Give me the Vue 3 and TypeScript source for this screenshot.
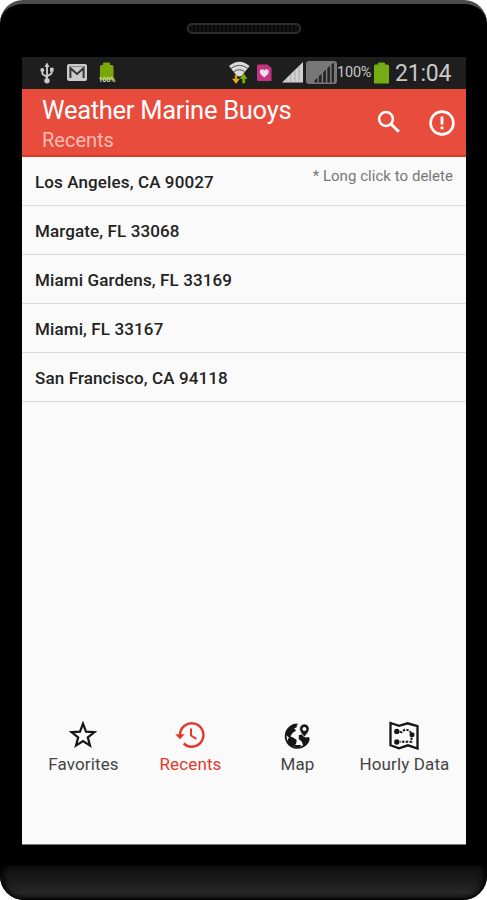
<script setup lang="ts">
import { ref } from 'vue'

interface Tab {
  id: string
  label: string
}

const places: string[] = [
  'Los Angeles, CA 90027',
  'Margate, FL 33068',
  'Miami Gardens, FL 33169',
  'Miami, FL 33167',
  'San Francisco, CA 94118',
]

const tabs: Tab[] = [
  { id: 'favorites', label: 'Favorites' },
  { id: 'recents', label: 'Recents' },
  { id: 'map', label: 'Map' },
  { id: 'hourly', label: 'Hourly Data' },
]

const active = ref('recents')
</script>

<template>
  <div class="phone">
    <div class="top-bezel">
      <div class="speaker"></div>
    </div>

    <main class="screen">
      <div class="status">
        <svg class="usb" width="14" height="22" viewBox="0 0 14 22" fill="none" stroke="#c9c9c9" stroke-width="1.9">
          <path d="M7 4v14M2.300 8v3.200c0 2.600 4.700 1.800 4.700 5M11.700 8v2.400c0 3-4.700 2-4.700 5" />
          <path d="M7 .5 9.600 5H4.400z" fill="#c9c9c9" stroke="none" />
          <circle cx="7" cy="18.700" r="2.700" fill="#c9c9c9" stroke="none" />
          <circle cx="2.300" cy="8" r="2" fill="#c9c9c9" stroke="none" />
          <path d="M10 5.800h3.600v3.600H10z" fill="#c9c9c9" stroke="none" />
        </svg>
        <svg class="mail" width="20" height="17" viewBox="0 0 20 17">
          <rect width="20" height="17" rx="2" fill="#cbcbcb" />
          <path d="M3.400 14V4.200L10 10l6.600-5.800V14" fill="none" stroke="#333" stroke-width="2" />
          <path d="M3 2.600h14" stroke="#777" stroke-width=".8" />
        </svg>
        <svg class="charge" width="18" height="21" viewBox="0 0 18 21">
          <path d="M2 4.500q0-1.500 1.500-1.500H5V1.500Q5 .5 6 .5h5q1 0 1 1V3h2q1.500 0 1.500 1.500V18H2z" fill="#79a808" />
          <text x="9" y="20" text-anchor="middle" textLength="17" class="tiny">100%</text>
        </svg>
        <svg class="wifi" width="21" height="23" viewBox="0 0 21 23">
          <path d="M0 5Q10.300-3.500 20.600 5L13 14.500q-2.700 2-5.400 0z" fill="#dadada" />
          <path d="M2 7.300q8.300-6 16.600 0M5 10.700q5.300-4 10.600 0" fill="none" stroke="#444" stroke-width=".9" />
          <path d="M7.800 14v4h2.500L7 22.500 3.700 18h2.500v-4z" fill="#e9ad16" stroke="#e9ad16" stroke-width=".6" />
          <path d="M13.700 22v-4.500h-2.500l3.500-4.500L18 17.500h-2.300V22z" fill="#80b900" stroke="#80b900" stroke-width=".6" />
        </svg>
        <svg class="heart" width="15" height="18" viewBox="0 0 15 18">
          <path d="M1 .5h9.500L14.500 4v13H1q-1 0-1-1V1.500Q0 .5 1 .5z" fill="#c33382" />
          <path d="M7.300 13.500C5 11.400 2.800 10 2.800 7.500c0-2.600 3.400-3 4.500-.9 1.100-2.100 4.500-1.700 4.500.9 0 2.500-2.200 3.900-4.500 6z" fill="#f3dceb" />
        </svg>
        <svg class="signal" width="21" height="21" viewBox="0 0 21 21">
          <path d="M0 20.500 21 0v20.500z" fill="#d2d2d2" />
          <path d="M4.500 16v5M8.700 12v9M12.900 8v13M17 4v17" stroke="#999" stroke-width=".8" />
        </svg>
        <svg class="signal-two" width="31" height="23" viewBox="0 0 31 23">
          <rect width="31" height="23" rx="3" fill="#777" />
          <path d="M8.500 21.500v-2l3-2.800v4.800zm4.400 0v-6.300l2.700-2.500v8.800zm4.300 0V11.200l2.700-2.600v12.900zm4.200 0V7.200L24 4.700v16.800zm4.200 0V3.500L28 1.500v20z" fill="#242424" />
        </svg>
        <span class="percent">100%</span>
        <svg class="battery" width="15" height="22" viewBox="0 0 15 22">
          <path d="M0 4q0-1.500 1.500-1.500H4V1.500Q4 .5 5 .5h5q1 0 1 1v1h2.500Q15 2.500 15 4v17.500H0z" fill="#75ab13" />
        </svg>
        <span class="clock">21:04</span>
      </div>

      <header class="appbar">
        <div class="titles">
          <h1>Weather Marine Buoys</h1>
          <p>Recents</p>
        </div>
        <svg class="search" width="24" height="24" viewBox="0 0 24 24" fill="none" stroke="#fff">
          <circle cx="9" cy="9" r="6.900" stroke-width="2.500" />
          <path d="m14 14 7.800 7.800" stroke-width="3" />
        </svg>
        <svg class="alert" width="26" height="26" viewBox="0 0 26 26" fill="none" stroke="#fff" stroke-width="2.600">
          <circle cx="13" cy="13" r="11.400" />
          <path d="M13 6.500v8M13 16.400v2.900" stroke-width="2.800" />
        </svg>
      </header>

      <section class="list">
        <div v-for="place in places" :key="place" class="row">{{ place }}</div>
        <p class="hint">* Long click to delete</p>
      </section>

      <nav class="tabs">
        <button
          v-for="tab in tabs"
          :key="tab.id"
          type="button"
          class="tab"
          :class="[tab.id, { active: active === tab.id }]"
          @click="active = tab.id"
        >
          <svg v-if="tab.id === 'favorites'" width="30" height="30" viewBox="0 0 30 30">
            <path d="m15 3.700 3 8 8.400.4-6.600 5.300 2.200 8.200-7-4.500-7 4.500 2.200-8.200-6.600-5.300 8.400-.4z" fill="none" stroke="currentColor" stroke-width="2.200" />
          </svg>
          <svg v-else-if="tab.id === 'recents'" width="30" height="30" viewBox="0 0 30 30" fill="none" stroke="currentColor" stroke-width="2.400">
            <path d="M5 15A11.700 11.700 0 1 1 8.700 23.500" />
            <path d="M.2 14.300h9.400L5 19.200z" fill="currentColor" stroke="none" />
            <path d="M16 8.500v7l5.300 3.300" stroke-width="2" />
          </svg>
          <svg v-else-if="tab.id === 'map'" width="30" height="30" viewBox="0 0 30 30">
            <path d="M15.500 4.400A11.800 11.800 0 1 0 27 18.500" fill="none" stroke="currentColor" stroke-width="1.700" />
            <path d="M5 9.500 9.500 5.600l4.600-.9 1 2.300-3 1.500 2 2-3.500 2.600-2.300 3.200 3.200 1.400 3.200 2.200-.5 3.700-2.500 3.100q-4.900-1.700-6.400-6.300L7 17.500l-3.400-2.800z" fill="currentColor" />
            <path d="m16.800 15.200 3.400-1 3.300 3.300 3.800-.6-1 5.500-4.800 4.200-1.700-4.800-3-2.700z" fill="currentColor" />
            <path d="M12 25h7.500l-2.300 2.700-4-.4z" fill="currentColor" />
            <path d="M22.400 4a4.800 4.800 0 0 1 4.800 4.900c0 2.500-2.500 5.100-4.800 8.200-2.300-3.100-4.800-5.700-4.800-8.200A4.800 4.800 0 0 1 22.400 4z" fill="currentColor" stroke="#fafafa" stroke-width=".7" />
            <circle cx="22.400" cy="8.900" r="2" fill="#fafafa" />
          </svg>
          <svg v-else width="30" height="30" viewBox="0 0 30 30" fill="none" stroke="currentColor">
            <path d="m1.500 3 8.600 2.800 8.500-2.500 9.900 2.900v22.300l-9.500-3.200-9 3-8.500-3z" stroke-width="2.300" />
            <circle cx="7.800" cy="11.400" r="2.700" fill="currentColor" stroke="none" />
            <circle cx="7.800" cy="22" r="2.700" fill="currentColor" stroke="none" />
            <circle cx="23" cy="14.700" r="2.500" fill="currentColor" stroke="none" />
            <path d="M11 11.500q2 1.800 3.200-.3t3-1.700l3 1.200 1.700 2M22.500 17.500v4.300H11" stroke-width="1.900" stroke-dasharray="2.500 1.300" />
          </svg>
          <span>{{ tab.label }}</span>
        </button>
      </nav>
    </main>

    <div class="bottom-bezel"></div>
  </div>
</template>

<style>
body {
  margin: 0;
  background: #fff;
}
</style>

<style scoped>
* {
  box-sizing: border-box;
}
.phone {
  width: 487px;
  height: 900px;
  overflow: hidden;
  display: flex;
  flex-direction: column;
  background: #000;
  border-top: 4px solid #4c4c4c;
  border-radius: 23px 23px 24px 24px;
  font-family: Roboto, "Liberation Sans", sans-serif;
}
.top-bezel {
  height: 53px;
  padding-top: 19px;
  flex: none;
}
.speaker {
  width: 114px;
  height: 11px;
  margin: 0 auto;
  border: 2px solid #2e2e2e;
  border-radius: 5px;
  background: repeating-linear-gradient(90deg, #080808 0 2px, #161616 2px 4px);
}
.screen {
  width: 444px;
  height: 788px;
  margin-left: 22px;
  flex: none;
  display: flex;
  flex-direction: column;
  background: #fafafa;
  border-bottom: 1px solid #777;
}
.status {
  height: 32px;
  padding-bottom: 1px;
  flex: none;
  display: flex;
  align-items: center;
  background: #1e1e1e;
  color: #c8c8c8;
}
.status svg {
  flex: none;
}
.usb {
  margin-left: 18px;
}
.mail {
  margin-left: 13px;
}
.charge {
  margin-left: 11px;
}
.wifi {
  margin-left: 113px;
}
.heart {
  margin-left: 7px;
}
.signal {
  margin-left: 10px;
}
.signal-two {
  margin-left: 3px;
}
.tiny {
  font-size: 7px;
  font-weight: 700;
  fill: #d4dfb4;
}
.percent {
  width: 36px;
  font-size: 14.500px;
  letter-spacing: -0.200px;
}
.battery {
  margin-left: 1px;
}
.clock {
  margin: 2px 0 0 6px;
  font-size: 23px;
  letter-spacing: -0.200px;
}
.appbar {
  height: 68px;
  flex: none;
  display: flex;
  padding-left: 20px;
  background: #e84c3d;
  border-bottom: 2px solid #d93b29;
  color: #fff;
}
.titles {
  width: 335px;
}
h1 {
  margin: 6px 0 0;
  font-size: 25.500px;
  line-height: 31px;
  font-weight: 400;
  letter-spacing: -0.280px;
  white-space: nowrap;
}
.titles p {
  margin: 2px 0 0;
  font-size: 20px;
  line-height: 24px;
  color: #fbbcb3;
}
.search {
  margin-top: 21px;
}
.alert {
  margin: 21px 0 0 28px;
}
.list {
  position: relative;
  flex: none;
}
.row {
  height: 49.100px;
  padding: 2px 13px 0;
  display: flex;
  align-items: center;
  border-bottom: 1px solid #dadada;
  color: #222;
  font-size: 17px;
  font-weight: 500;
  letter-spacing: 0.120px;
}
.hint {
  position: absolute;
  top: 9px;
  right: 13px;
  margin: 0;
  font-size: 15px;
  line-height: 20px;
  letter-spacing: 0.040px;
  color: #777;
}
.tabs {
  margin: auto 6px 69px 8px;
  display: grid;
  grid-template-columns: repeat(4, 107px);
}
.tab {
  display: flex;
  flex-direction: column;
  align-items: center;
  gap: 3px;
  padding: 0;
  border: 0;
  background: none;
  color: #151515;
  font: 17px/22px Roboto, "Liberation Sans", sans-serif;
  letter-spacing: 0.120px;
  white-space: nowrap;
}
.tab svg {
  margin-right: 2px;
}
.tab span {
  color: #444;
}
.tab.active,
.tab.active span {
  color: #e2382b;
}
.bottom-bezel {
  flex: 1;
  margin-top: 20px;
  border-radius: 4px 4px 24px 24px;
  background: linear-gradient(#101010, #1b1b1b 45%, #282828 80%, #1d1d1d 92%, #000);
  box-shadow: inset 5px 0 7px -2px #000, inset -5px 0 7px -2px #000;
}
</style>
